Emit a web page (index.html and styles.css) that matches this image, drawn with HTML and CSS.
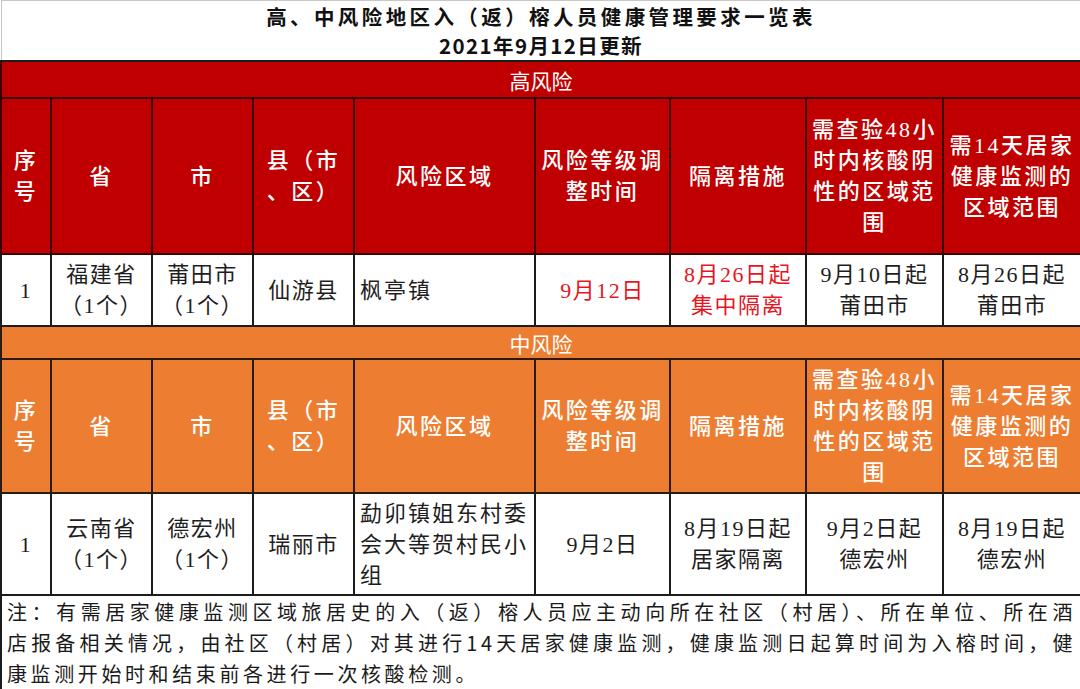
FILE: index.html
```html
<!DOCTYPE html>
<html lang="zh-CN">
<head>
<meta charset="utf-8">
<title>高、中风险地区入（返）榕人员健康管理要求一览表</title>
<link rel="stylesheet" href="styles.css">
</head>
<body>
<table class="sheet">
  <colgroup>
    <col class="c1"><col class="c2"><col class="c3"><col class="c4"><col class="c5"><col class="c6"><col class="c7"><col class="c8"><col class="c9">
  </colgroup>
  <tr class="title-row">
    <td colspan="9" class="title">
      <div class="t1">高、中风险地区入（返）榕人员健康管理要求一览表</div>
      <div class="t2">2021年9月12日更新</div>
    </td>
  </tr>
  <tr class="band-row high">
    <td colspan="9" class="band">高风险</td>
  </tr>
  <tr class="head-row high head-high">
    <td class="head">序号</td>
    <td class="head">省</td>
    <td class="head">市</td>
    <td class="head">县（市<br>、区）</td>
    <td class="head">风险区域</td>
    <td class="head">风险等级调整时间</td>
    <td class="head">隔离措施</td>
    <td class="head">需查验48小时内核酸阴性的区域范围</td>
    <td class="head">需14天居家健康监测的区域范围</td>
  </tr>
  <tr class="data-row data-high">
    <td class="cell">1</td>
    <td class="cell">福建省<br>（1个）</td>
    <td class="cell">莆田市<br>（1个）</td>
    <td class="cell">仙游县</td>
    <td class="cell left">枫亭镇</td>
    <td class="cell red">9月12日</td>
    <td class="cell red">8月26日起<br>集中隔离</td>
    <td class="cell">9月10日起<br>莆田市</td>
    <td class="cell">8月26日起<br>莆田市</td>
  </tr>
  <tr class="band-row mid">
    <td colspan="9" class="band">中风险</td>
  </tr>
  <tr class="head-row mid head-mid">
    <td class="head">序号</td>
    <td class="head">省</td>
    <td class="head">市</td>
    <td class="head">县（市<br>、区）</td>
    <td class="head">风险区域</td>
    <td class="head">风险等级调整时间</td>
    <td class="head">隔离措施</td>
    <td class="head">需查验48小时内核酸阴性的区域范围</td>
    <td class="head">需14天居家健康监测的区域范围</td>
  </tr>
  <tr class="data-row data-mid">
    <td class="cell">1</td>
    <td class="cell">云南省<br>（1个）</td>
    <td class="cell">德宏州<br>（1个）</td>
    <td class="cell">瑞丽市</td>
    <td class="cell left">勐卯镇姐东村委会大等贺村民小组</td>
    <td class="cell">9月2日</td>
    <td class="cell">8月19日起<br>居家隔离</td>
    <td class="cell">9月2日起<br>德宏州</td>
    <td class="cell">8月19日起<br>德宏州</td>
  </tr>
  <tr class="note-row">
    <td colspan="9" class="note">
      <div class="nl just">注：有需居家健康监测区域旅居史的入（返）榕人员应主动向所在社区（村居）、所在单位、所在酒</div>
      <div class="nl just">店报备相关情况，由社区（村居）对其进行14天居家健康监测，健康监测日起算时间为入榕时间，健</div>
      <div class="nl">康监测开始时和结束前各进行一次核酸检测。</div>
    </td>
  </tr>
</table>
</body>
</html>
```

FILE: styles.css
```css
html, body {
  margin: 0;
  padding: 0;
  background: #ffffff;
}

.sheet {
  width: 1080px;
  border-collapse: collapse;
  table-layout: fixed;
  font-family: "Liberation Serif", "Noto Sans CJK SC", serif;
  color: #1e1e1e;
}

.c1 { width: 50px; }
.c2 { width: 101px; }
.c3 { width: 101px; }
.c4 { width: 101px; }
.c5 { width: 181px; }
.c6 { width: 135px; }
.c7 { width: 136px; }
.c8 { width: 137px; }
.c9 { width: 138px; }

.sheet td {
  border: 2px solid #1c1c1c;
  padding: 0 4px;
  text-align: center;
  vertical-align: middle;
}

.title-row { height: 60px; }
.sheet td.title {
  border-top: 1px solid #c8c8c8;
  border-left: 1px solid #c8c8c8;
  border-right: 1px solid #c8c8c8;
  font-family: "Noto Sans CJK SC", sans-serif;
  font-weight: 700;
  font-size: 20.5px;
  line-height: 29px;
  color: #111;
  padding-top: 1px;
  padding-bottom: 0;
}
.t1 { letter-spacing: 3.4px; }
.t2 { letter-spacing: 1.4px; }

.band-row.high { height: 37px; }
.band-row.mid { height: 33px; }
.sheet td.band {
  font-family: "Noto Sans CJK SC", sans-serif;
  font-size: 21px;
  line-height: 26px;
  color: #ffffff;
}
.high td { background: #c00000; }
.mid td { background: #ed7d31; }
.high td.band, .high td.head { border-color: #3a0000; }
.mid td.band, .mid td.head { border-color: #2a1a10; }

.head-high { height: 156px; }
.head-mid { height: 134px; }
.sheet td.head {
  color: #ffffff;
  font-size: 22px;
  font-weight: 500;
  line-height: 31px;
  letter-spacing: 2.5px;
  padding: 0 3px;
}

.data-high { height: 72px; }
.data-mid { height: 102px; }
.sheet td.cell {
  background: #ffffff;
  font-size: 22px;
  line-height: 31px;
  letter-spacing: 1.5px;
  padding: 0 4px;
}
.sheet td.left {
  text-align: left;
  padding-left: 5px;
  letter-spacing: 2px;
}
.sheet td.red { color: #e8141e; }

.note-row { height: 95px; }
.sheet td.note {
  text-align: left;
  font-family: "Noto Sans CJK SC", sans-serif;
  font-size: 20px;
  line-height: 31px;
  letter-spacing: 3.6px;
  padding: 0 4px 2px 5px;
  color: #1a1a1a;
}
.nl { white-space: nowrap; }
.nl.just {
  text-align: justify;
  text-align-last: justify;
  white-space: normal;
}
```
